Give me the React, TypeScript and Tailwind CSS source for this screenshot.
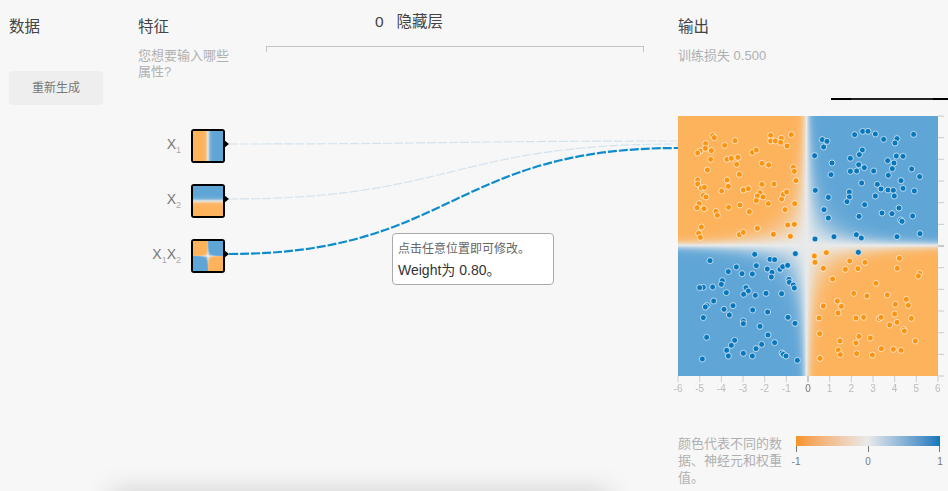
import React, { useEffect, useRef } from "react"

type Field = (x: number, y: number) => number

const ORANGE = [253, 178, 92]
const MID = [232, 234, 235]
const BLUE = [95, 165, 214]

const mix = (v: number) => {
  const to = v < 0 ? ORANGE : BLUE
  const t = Math.min(1, Math.abs(v))
  return MID.map((c, i) => Math.round(c + (to[i] - c) * t))
}

const HeatCanvas = ({ size, field, className }: { size: number; field: Field; className?: string }) => {
  const ref = useRef<HTMLCanvasElement>(null)

  useEffect(() => {
    const ctx = ref.current?.getContext("2d")
    if (!ctx) return
    const img = ctx.createImageData(size, size)
    for (let j = 0; j < size; j++) {
      for (let i = 0; i < size; i++) {
        const x = ((i + 0.5) / size) * 12 - 6
        const y = 6 - ((j + 0.5) / size) * 12
        const [r, g, b] = mix(field(x, y))
        const p = (j * size + i) * 4
        img.data[p] = r
        img.data[p + 1] = g
        img.data[p + 2] = b
        img.data[p + 3] = 255
      }
    }
    ctx.putImageData(img, 0, 0)
  }, [size, field])

  return <canvas ref={ref} width={size} height={size} className={className} />
}

const fieldX1: Field = (x) => Math.tanh(1.1 * x)
const fieldX2: Field = (_, y) => Math.tanh(1.1 * y)
const fieldX1X2: Field = (x, y) => Math.tanh(1.6 * x * y)
const fieldOutput: Field = (x, y) => Math.tanh(0.75 * (x + 0.07) * (y - 0.03))

// dot positions read off the reference, relative to the plot corner
const orangeTop = [
  [158, 136], [163, 143], [137, 161], [136, 175], [120, 183], [113, 189], [154, 182], [152, 208], [194, 166], [225, 152],
  [142, 240], [201, 208], [214, 205], [234, 202], [230, 223], [238, 253], [277, 187], [289, 180], [332, 136], [394, 134],
  [332, 153], [346, 153], [364, 145], [362, 157], [381, 168], [306, 220], [326, 225], [400, 232], [403, 244], [408, 272],
  [113, 270], [113, 282], [124, 294], [133, 292], [201, 270], [205, 289], [185, 303], [250, 300], [265, 296], [306, 283],
  [342, 282], [300, 308], [292, 318], [309, 321], [289, 332], [130, 316], [138, 321], [117, 341], [111, 353], [132, 356],
  [168, 364], [172, 376], [206, 352], [240, 345], [268, 365], [325, 341], [365, 327], [370, 313], [380, 306], [404, 341],
  [375, 359], [124, 411], [116, 430], [121, 442], [238, 434], [250, 427], [292, 415], [340, 433], [383, 405], [403, 403],
  [391, 439],
]
const blueTop = [
  [584, 134], [608, 124], [624, 124], [646, 132], [671, 148], [711, 146], [705, 159], [761, 133], [487, 149], [501, 154],
  [491, 171], [607, 180], [598, 194], [571, 205], [464, 197], [516, 219], [596, 224], [613, 233], [590, 243], [571, 244],
  [513, 254], [641, 243], [683, 212], [702, 219], [709, 198], [729, 199], [697, 236], [685, 256], [755, 237], [779, 260],
  [723, 272], [605, 279], [652, 283], [663, 297], [684, 300], [700, 301], [729, 295], [763, 303], [703, 318], [646, 318],
  [568, 306], [568, 321], [561, 335], [505, 322], [466, 301], [614, 344], [492, 359], [505, 384], [597, 379], [666, 369],
  [696, 371], [717, 354], [758, 378], [722, 390], [726, 394], [465, 447], [522, 440], [589, 434], [604, 444], [711, 440],
  [780, 431],
]
const blueBottom = [
  [284, 43], [406, 41], [595, 37], [150, 62], [330, 58], [344, 59], [289, 77], [229, 81], [205, 95], [246, 101],
  [277, 102], [322, 87], [336, 97], [334, 111], [360, 88], [368, 80], [383, 76], [387, 118], [388, 127], [400, 135],
  [403, 144], [187, 122], [184, 133], [158, 141], [130, 142], [119, 143], [258, 143], [265, 153], [251, 163], [286, 166],
  [318, 160], [365, 161], [199, 158], [161, 183], [141, 197], [136, 201], [192, 208], [219, 197], [208, 225], [130, 233],
  [278, 210], [323, 216], [384, 232], [405, 250], [250, 243], [250, 251], [300, 259], [140, 292], [224, 301], [214, 316],
  [200, 331], [205, 348], [250, 340], [277, 348], [288, 326], [305, 313], [344, 308], [324, 285], [366, 339], [370, 343],
  [378, 348], [412, 361], [127, 357],
]
const orangeBottom = [
  [463, 48], [499, 38], [465, 67], [569, 63], [615, 67], [718, 55], [712, 85], [490, 85], [556, 88], [594, 86],
  [779, 100], [775, 108], [518, 117], [648, 130], [581, 160], [621, 168], [682, 165], [739, 178], [532, 183], [490, 198],
  [544, 199], [706, 193], [745, 196], [534, 219], [477, 234], [588, 234], [611, 232], [704, 222], [657, 236], [663, 232],
  [711, 247], [689, 255], [754, 235], [731, 268], [733, 273], [479, 281], [597, 289], [631, 294], [588, 309], [540, 303],
  [766, 303], [535, 330], [541, 344], [590, 341], [637, 345], [664, 326], [700, 328], [723, 331], [480, 355],
]

const topDot = ([x, y]: number[]) => [(x - 54) / 3, (y - 78) / 3]
const bottomDot = ([x, y]: number[]) => [(x - 54) / 3, y / 3 + 124]

const dots = [
  ...orangeTop.map((p) => ({ p: topDot(p), c: "#fb9410" })),
  ...blueTop.map((p) => ({ p: topDot(p), c: "#0877bd" })),
  ...blueBottom.map((p) => ({ p: bottomDot(p), c: "#0877bd" })),
  ...orangeBottom.map((p) => ({ p: bottomDot(p), c: "#fb9410" })),
]

const features = [
  { id: "x1", field: fieldX1, label: [["X", "1"]] },
  { id: "x2", field: fieldX2, label: [["X", "2"]] },
  { id: "x1x2", field: fieldX1X2, label: [["X", "1"], ["X", "2"]] },
]

const axisLabels = [-6, -5, -4, -3, -2, -1, 0, 1, 2, 3, 4, 5, 6]
const STEP = 260 / 12

const App = () => {
  return (
    <div
      className="relative flex h-[491px] w-[948px] overflow-hidden bg-[#f7f7f7] text-[13px] text-[#b0b0b0]"
      style={{ fontFamily: '"Liberation Sans", "Noto Sans CJK SC", sans-serif' }}
    >
      {/* data */}
      <div className="w-[138px] shrink-0 pt-[16px] pl-[9px]">
        <h4 className="text-[15.5px] leading-[22px] font-normal text-[#444444]">数据</h4>
        <button className="mt-[33px] flex h-[34px] w-[94px] items-center justify-center rounded-[3px] bg-[#eeeeee] text-[12px] text-[#777777]">
          重新生成
        </button>
      </div>

      {/* features */}
      <div className="w-[128px] shrink-0 pt-[16px]">
        <h4 className="text-[15.5px] leading-[22px] font-normal text-[#444444]">特征</h4>
        <p className="mt-[10px] w-[92px] text-[13px] leading-[16px]">您想要输入哪些属性?</p>
        <div className="mt-[49px] -ml-[30px] flex flex-col gap-[21px]">
          {features.map((f) => (
            <div key={f.id} className="flex h-[34px] items-center justify-end gap-[10px] pr-[41px]">
              <div className="flex text-[14px] leading-none text-[#777777]">
                {f.label.map(([x, n], i) => (
                  <span key={i} className="flex">
                    {x}
                    <span className="mt-[9px] text-[9px] text-[#aaaaaa]">{n}</span>
                  </span>
                ))}
              </div>
              <div className="relative h-[34px] w-[34px] shrink-0">
                <HeatCanvas
                  size={30}
                  field={f.field}
                  className="block h-[34px] w-[34px] rounded-[3px] border-2 border-black"
                />
                <div className="absolute top-[11px] -right-[4px] h-0 w-0 border-y-[4px] border-l-[5px] border-y-transparent border-l-black" />
              </div>
            </div>
          ))}
        </div>
      </div>

      {/* hidden layers */}
      <div className="w-[378px] shrink-0 pt-[12px]">
        <div className="flex justify-center gap-[13px] pr-[92px] text-[15.5px] leading-[20px] text-[#444444]">
          <span>0</span>
          <span>隐藏层</span>
        </div>
        <div className="mt-[14px] h-[6px] border-x border-t border-[#c4c4c4]" />
      </div>

      {/* output */}
      <div className="ml-[34px] min-w-0 flex-1 pt-[16px]">
        <h4 className="text-[15.5px] leading-[22px] font-normal text-[#444444]">输出</h4>
        <p className="mt-[10px] text-[13px] leading-[16px]">训练损失 0.500</p>
        <div className="mt-[34px] ml-[153px] flex h-[2px]">
          <div className="w-[20px] bg-black" />
          <div className="w-[82px] bg-[#222222]" />
          <div className="flex-1 bg-black" />
        </div>
        <div className="relative mt-[16px] h-[260px] w-[260px]">
          <HeatCanvas size={260} field={fieldOutput} className="block h-[260px] w-[260px]" />
          <svg className="absolute inset-0 overflow-visible" width="260" height="260">
            {dots.map((d, i) => (
              <circle
                key={i}
                cx={d.p[0]}
                cy={d.p[1]}
                r="3"
                fill={d.c}
                stroke="#ffffff"
                strokeOpacity="0.65"
                strokeWidth="1"
              />
            ))}
            {axisLabels.map((n) => (
              <g key={n}>
                <line
                  x1="260"
                  x2="266"
                  y1={(n + 6) * STEP}
                  y2={(n + 6) * STEP}
                  stroke={n === 0 ? "#999999" : "#cccccc"}
                />
                <line
                  x1={(n + 6) * STEP}
                  x2={(n + 6) * STEP}
                  y1="260"
                  y2="266"
                  stroke={n === 0 ? "#999999" : "#cccccc"}
                />
              </g>
            ))}
          </svg>
        </div>
        <div className="relative mt-[7px] flex w-[260px] justify-between">
          {axisLabels.map((n) => (
            <span
              key={n}
              className={`w-0 whitespace-nowrap text-[10px] leading-[12px] ${n === 0 ? "text-[#777777]" : "text-[#bbbbbb]"}`}
            >
              <span className="block w-[20px] -translate-x-1/2 text-center">{n}</span>
            </span>
          ))}
        </div>
        <div className="mt-[41px] flex">
          <p className="-mt-px w-[108px] shrink-0 text-[13px] leading-[17px]">颜色代表不同的数据、神经元和权重值。</p>
          <div className="ml-[10px] w-[144px] shrink-0">
            <div className="h-[10px] bg-gradient-to-r from-[#f59322] via-[#e8eaeb] to-[#0877bd]" />
            <div className="flex h-[6px] justify-between">
              <div className="w-px bg-[#777777]" />
              <div className="w-px bg-[#777777]" />
              <div className="w-px bg-[#777777]" />
            </div>
            <div className="mt-[4px] flex justify-between text-[10px] leading-[12px] text-[#777777]">
              <span className="w-0"><span className="block w-[20px] -translate-x-1/2 text-center">-1</span></span>
              <span className="w-0"><span className="block w-[20px] -translate-x-1/2 text-center">0</span></span>
              <span className="w-0"><span className="block w-[20px] -translate-x-1/2 text-center">1</span></span>
            </div>
          </div>
        </div>
      </div>

      {/* links between the feature boxes and the plot */}
      <svg className="pointer-events-none absolute top-0 left-0" width="948" height="491" fill="none">
        <path d="M229 144C452 144 452 141 678 141" stroke="#d3e3ee" strokeWidth="1.2" strokeDasharray="9 2" />
        <path d="M229 199C452 199 452 144 678 144" stroke="#d3e3ee" strokeWidth="1.2" strokeDasharray="9 2" />
        <path d="M229 254C452 254 452 148 678 148" stroke="#0c8ccd" strokeWidth="2.2" strokeDasharray="9 2" />
      </svg>

      {/* tooltip */}
      <div className="absolute top-[233px] left-[392px] h-[52px] w-[162px] rounded-[4px] border border-[#aaaaaa] bg-white px-[5px] pt-[7px]">
        <div className="text-[12px] leading-[16px] text-[#666666]">点击任意位置即可修改。</div>
        <div className="mt-[4px] text-[14px] leading-[18px] text-[#333333]">Weight为 0.80。</div>
      </div>

      {/* footer shadow coming up from below the fold */}
      <div className="absolute top-[491px] left-[110px] h-[40px] w-[500px] shadow-[0_0_28px_rgba(0,0,0,0.16)]" />
    </div>
  )
}

export default App
